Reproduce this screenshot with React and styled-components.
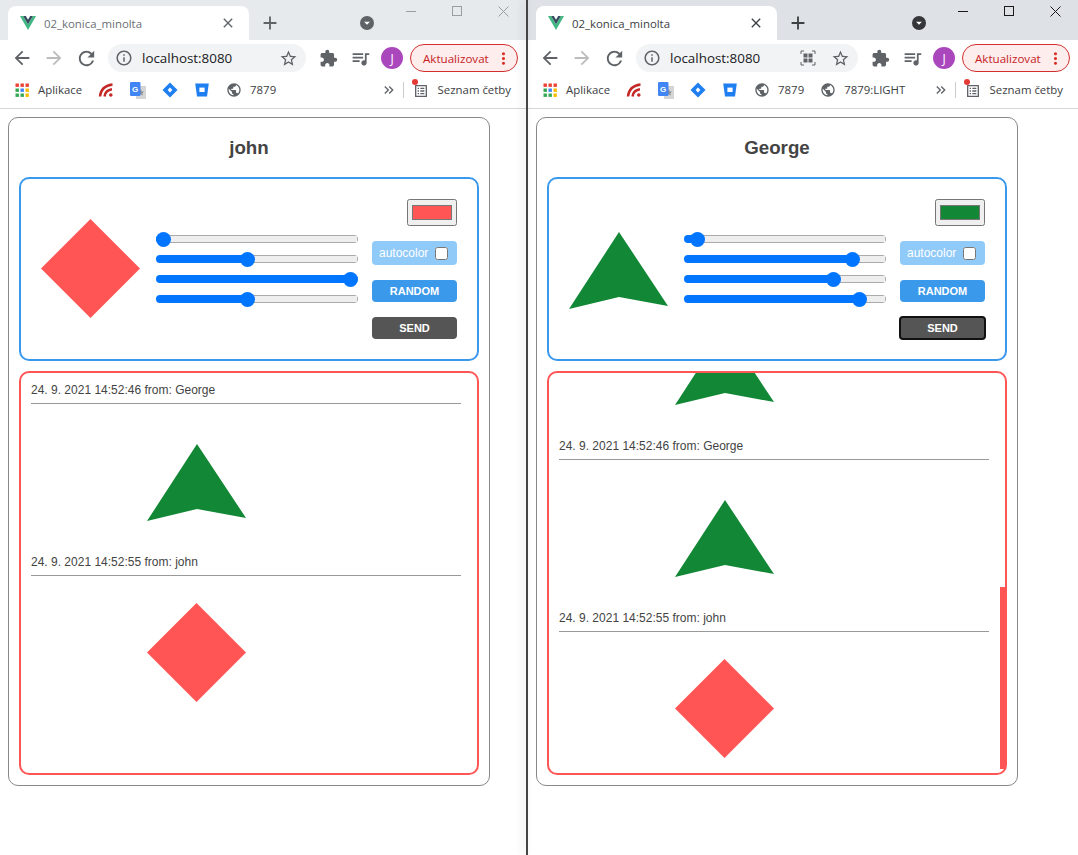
import React, { useLayoutEffect, useRef, useState } from "react";
import styled, { createGlobalStyle } from "styled-components";
import {
	MdArrowBack,
	MdArrowForward,
	MdRefresh,
	MdInfoOutline,
	MdStarBorder,
	MdClose,
	MdAdd,
	MdExtension,
	MdOutlineQueueMusic,
	MdMoreVert,
	MdPublic,
	MdKeyboardDoubleArrowRight,
	MdArrowDropDown,
	MdOutlineListAlt,
} from "react-icons/md";

const RED = "#ff5555";
const GREEN = "#128736";
const BLUE = "#3b99ec";
const UI_FONT = `"Open Sans", "Noto Sans", sans-serif`;

const GlobalStyle = createGlobalStyle`
	html, body {
		margin: 0;
		padding: 0;
		background: #fff;
	}
	* {
		box-sizing: border-box;
	}
`;

const Desktop = styled.div`
	display: flex;
	width: 1078px;
	height: 855px;
	overflow: hidden;
`;

const BrowserWindow = styled.div`
	flex: none;
	width: ${(p) => p.$width}px;
	height: 100%;
	font-family: ${UI_FONT};
	background: #fff;
`;

const Divider = styled.div`
	flex: none;
	width: 2px;
	background: #454545;
	box-shadow: -3px 0 8px rgba(0, 0, 0, 0.16);
	z-index: 1;
`;

/* browser chrome */
const TabStrip = styled.div`
	display: flex;
	height: 40px;
	padding-left: 8px;
	background: ${(p) => (p.$active ? "#dee1e6" : "#e7eaed")};
`;

const Tab = styled.div`
	display: flex;
	align-items: center;
	width: 241px;
	height: 34px;
	margin-top: 6px;
	padding: 0 8px 0 12px;
	background: #fff;
	border-radius: 8px 8px 0 0;
	font-size: 11.4px;
	color: ${(p) => (p.$active ? "#3c4043" : "#6b6f74")};
`;

const TabTitle = styled.span`
	flex: 1;
	margin-left: 8px;
	white-space: nowrap;
`;

const TabClose = styled.span`
	display: flex;
	margin-right: 5px;
	font-size: 16px;
	color: ${(p) => (p.$active ? "#3c4043" : "#5f6368")};
`;

const NewTab = styled.span`
	display: flex;
	align-items: center;
	justify-content: center;
	width: 28px;
	height: 28px;
	margin: 9px 0 0 7px;
	font-size: 22px;
	color: ${(p) => (p.$active ? "#3c4043" : "#5f6368")};
`;

const TabSearch = styled.span`
	display: flex;
	align-items: center;
	justify-content: center;
	align-self: flex-start;
	width: 14px;
	height: 14px;
	margin: 16px 14px 0 auto;
	border-radius: 50%;
	font-size: 16px;
	color: #fff;
	background: ${(p) => (p.$active ? "#35363a" : "#5f6368")};
`;

const WindowControl = styled.span`
	display: flex;
	align-items: center;
	justify-content: center;
	width: 46px;
	height: 22px;
	color: ${(p) => (p.$active ? "#1a1a1a" : "#9a9ea3")};
`;

const Toolbar = styled.div`
	display: flex;
	align-items: center;
	gap: 4px;
	height: 36px;
	padding-left: 8px;
	background: #fff;
`;

const ToolButton = styled.span`
	display: flex;
	align-items: center;
	justify-content: center;
	flex: none;
	width: 28px;
	height: 28px;
	font-size: ${(p) => p.$size || 20}px;
	color: ${(p) => p.$color || "#5f6368"};
`;

const Omnibox = styled.div`
	display: flex;
	align-items: center;
	flex: none;
	width: ${(p) => p.$width}px;
	height: 28px;
	margin: 0 4px;
	padding: 0 4px 0 7px;
	border-radius: 14px;
	background: #f1f3f4;
	font-size: 13.4px;
	color: #202124;
`;

const OmniInfo = styled.span`
	display: flex;
	font-size: 18px;
	color: #5f6368;
`;

const OmniText = styled.span`
	flex: 1;
	margin-left: 9px;
`;

const QrSlot = styled(ToolButton)`
	margin-right: 4px;
`;

const Avatar = styled.span`
	display: flex;
	align-items: center;
	justify-content: center;
	flex: none;
	width: 22px;
	height: 22px;
	margin: 0 3px;
	border-radius: 50%;
	background: #ab47bc;
	color: #fff;
	font-size: 12px;
`;

const UpdatePill = styled.div`
	display: flex;
	align-items: center;
	justify-content: space-between;
	flex: none;
	width: 108px;
	height: 28px;
	padding: 0 4px 0 12px;
	border: 1px solid #d32f2f;
	border-radius: 14px;
	background: #fdeded;
	color: #c5221f;
	font-size: 11.6px;
`;

const PillDots = styled.span`
	display: flex;
	font-size: 19px;
	color: #d93025;
`;

const Bookmarks = styled.div`
	display: flex;
	align-items: center;
	height: 33px;
	padding: 0 15px 5px 14px;
	border-bottom: 1px solid #d4d6d9;
	font-size: 11.4px;
	color: #3c4043;
	white-space: nowrap;
`;

const BookmarkGroup = styled.div`
	display: flex;
	align-items: center;
	gap: 16px;
	margin-left: 16px;
`;

const Bookmark = styled.span`
	display: flex;
	align-items: center;
	gap: 8px;
`;

const BookmarkIcon = styled.span`
	display: flex;
	flex: none;
	width: 16px;
	height: 16px;
	font-size: 16px;
	color: #5f6368;
`;

const BookmarkTail = styled.div`
	display: flex;
	align-items: center;
	margin-left: auto;
`;

const Chevrons = styled.span`
	display: flex;
	font-size: 16px;
	color: #5f6368;
`;

const BookmarkSeparator = styled.span`
	width: 1px;
	height: 16px;
	margin: 0 9px 0 6px;
	background: #c9cbce;
`;

const ReadingIcon = styled(BookmarkIcon)`
	position: relative;
	margin-right: 9px;
	font-size: 18px;
`;

const RedDot = styled.span`
	position: absolute;
	top: -3px;
	left: -1px;
	width: 6px;
	height: 6px;
	border-radius: 50%;
	background: #e53935;
`;

/* page content */
const Page = styled.div`
	padding: 8px;
	font-family: "Liberation Sans", Arial, sans-serif;
	color: #444;
`;

const Card = styled.div`
	width: 482px;
	height: 669px;
	padding: 0 10px 10px;
	border: 1px solid #888;
	border-radius: 10px;
`;

const Name = styled.h1`
	margin: 18px 0 18px;
	font-size: 18.72px;
	line-height: 23px;
	font-weight: 700;
	text-align: center;
	color: #444;
`;

const Editor = styled.div`
	display: flex;
	align-items: center;
	height: 184px;
	padding: 0 20px;
	border: 2px solid ${BLUE};
	border-radius: 10px;
`;

const SHAPES = {
	diamond: { points: "49.5,0 99,49.5 49.5,99 0,49.5", color: RED },
	arrow: { points: "50,13 99,87 50,78 0,90", color: GREEN },
};

const Shape = ({ kind, className }) => (
	<svg className={className} viewBox="0 0 100 100">
		<polygon points={SHAPES[kind].points} fill={SHAPES[kind].color} />
	</svg>
);

const EditorShape = styled(Shape)`
	display: block;
	flex: none;
	width: 100px;
	height: 100px;
`;

const MessageShape = styled(EditorShape)`
	margin: 27px 0 0 116px;
`;

const Sliders = styled.div`
	display: flex;
	flex-direction: column;
	margin: 0 14px 0 15px;
`;

const Slider = styled.input`
	-webkit-appearance: none;
	appearance: none;
	display: block;
	width: 202px;
	height: 8px;
	margin: 6px 0;
	border-radius: 4px;
	background:
		linear-gradient(to right, #0075ff var(--fill), transparent var(--fill)),
		linear-gradient(#eeeeee, #eeeeee) center / calc(100% - 2px) calc(100% - 2px) no-repeat,
		#aaaaaa;
	outline: none;
	&::-webkit-slider-thumb {
		-webkit-appearance: none;
		appearance: none;
		width: 15px;
		height: 15px;
		border-radius: 50%;
		background: #0075ff;
	}
`;

const Controls = styled.div`
	display: flex;
	flex-direction: column;
	align-items: flex-end;
	gap: 15px;
	width: 85px;
`;

const ColorInput = styled.input`
	display: block;
	width: 50px;
	height: 27px;
	margin: 0;
`;

const AutoColor = styled.label`
	display: flex;
	align-items: center;
	justify-content: space-between;
	width: 85px;
	height: 24px;
	padding: 0 9px 0 7px;
	border-radius: 4px;
	background: #90caf9;
	color: #fff;
	font-size: 12px;
	input {
		width: 13px;
		height: 13px;
		margin: 0;
	}
`;

const ActionButton = styled.button`
	width: ${(p) => (p.$focused ? 87 : 85)}px;
	height: ${(p) => (p.$focused ? 24 : 22)}px;
	margin: ${(p) => (p.$focused ? "-1px" : 0)};
	padding: 0;
	border: ${(p) => (p.$focused ? "2px solid #111" : "none")};
	border-radius: 4px;
	background: ${(p) => p.$bg};
	color: #fff;
	font-family: inherit;
	font-size: 11px;
	font-weight: 700;
`;

const MessageFrame = styled.div`
	position: relative;
	margin-top: 10px;
`;

const MessageList = styled.div`
	height: 404px;
	padding: 10px 16px 0 10px;
	border: 2px solid ${RED};
	border-radius: 10px;
	overflow-y: scroll;
	scrollbar-width: none;
`;

const ScrollThumb = styled.div`
	position: absolute;
	right: 2px;
	width: 5px;
	background: ${RED};
`;

const Message = styled.div`
	margin-bottom: 24px;
	&:last-child {
		margin-bottom: 14px;
	}
`;

const MessageHead = styled.div`
	height: 21px;
	padding-bottom: 7px;
	border-bottom: 1px solid #999;
	font-size: 12px;
	line-height: 14px;
`;

const Logo = () => (
	<svg width="16" height="14" viewBox="0 0 16 14">
		<polygon points="0,0 3.2,0 8,8.2 12.8,0 16,0 8,14" fill="#41b883" />
		<polygon points="3.2,0 5.8,0 8,3.8 10.2,0 12.8,0 8,8.2" fill="#35495e" />
	</svg>
);

const AppsIcon = () => {
	const colors = ["#ea4335", "#ea4335", "#ea4335", "#34a853", "#4285f4", "#fbbc04", "#34a853", "#34a853", "#fbbc04"];
	return (
		<svg width="16" height="16" viewBox="0 0 16 16">
			{colors.map((c, i) => (
				<rect key={i} x={1.5 + (i % 3) * 5} y={1.5 + Math.floor(i / 3) * 5} width="3.4" height="3.4" fill={c} />
			))}
		</svg>
	);
};

const FeedIcon = () => (
	<svg width="16" height="16" viewBox="0 0 16 16" fill="none" stroke="#c62828" strokeWidth="2.4">
		<path d="M2 14.5 C2.5 8 7 3.5 14.5 2.5" />
		<path d="M6.5 14.5 C7 10.5 9.5 7.8 14 7.2" />
		<circle cx="12.8" cy="13" r="1.8" fill="#c62828" stroke="none" />
	</svg>
);

const TranslateIcon = () => (
	<svg width="16" height="18" viewBox="0 0 16 18">
		<rect x="6" y="4" width="10" height="13" fill="#d5d5d5" />
		<path d="M10.8 7 l1 2.4 2.4 .2 -1.9 1.5 .7 2.4 -2.2 -1.3 -2.1 1.3 .6 -2.4 -1.9 -1.5 2.4 -.2z" fill="#8a8f94" />
		<rect x="0" y="0" width="10.5" height="14" rx="1" fill="#4285f4" />
		<text x="5.2" y="9.6" fontSize="8" fontWeight="700" fontFamily="Liberation Sans" fill="#fff" textAnchor="middle">
			G
		</text>
	</svg>
);

const JiraIcon = () => (
	<svg width="16" height="16" viewBox="0 0 16 16">
		<polygon points="8,0.5 15.5,8 8,15.5 0.5,8" fill="#1f7ff0" />
		<polygon points="8,5.6 10.4,8 8,10.4 5.6,8" fill="#fff" />
	</svg>
);

const BitbucketIcon = () => (
	<svg width="16" height="16" viewBox="0 0 16 16">
		<path d="M1.2 1.5 H14.8 L13 14.5 H3z" fill="#1f7ff0" />
		<rect x="5.4" y="5.6" width="5.2" height="4.4" fill="#fff" />
	</svg>
);

const QrIcon = () => (
	<svg width="16" height="16" viewBox="0 0 16 16" fill="none" stroke="#5f6368">
		<path d="M1 4 V1 H4 M12 1 H15 V4 M15 12 V15 H12 M4 15 H1 V12" />
		<g fill="#5f6368" stroke="none">
			<rect x="3.5" y="3.5" width="4" height="4" />
			<rect x="8.5" y="3.5" width="4" height="4" />
			<rect x="3.5" y="8.5" width="4" height="4" />
			<rect x="8.5" y="8.5" width="4" height="4" />
		</g>
	</svg>
);

const MinimizeGlyph = () => (
	<svg width="10" height="10" viewBox="0 0 10 10">
		<path d="M0 5.5 H10" stroke="currentColor" />
	</svg>
);

const MaximizeGlyph = () => (
	<svg width="10" height="10" viewBox="0 0 10 10">
		<rect x="0.5" y="0.5" width="9" height="9" fill="none" stroke="currentColor" />
	</svg>
);

const CloseGlyph = () => (
	<svg width="11" height="11" viewBox="0 0 11 11">
		<path d="M0.5 0.5 L10.5 10.5 M10.5 0.5 L0.5 10.5" stroke="currentColor" />
	</svg>
);

const BrowserChrome = ({ active, omniboxWidth, extraBookmark }) => (
	<>
		<TabStrip $active={active}>
			<Tab $active={active}>
				<Logo />
				<TabTitle>02_konica_minolta</TabTitle>
				<TabClose $active={active}>
					<MdClose />
				</TabClose>
			</Tab>
			<NewTab $active={active}>
				<MdAdd />
			</NewTab>
			<TabSearch $active={active}>
				<MdArrowDropDown />
			</TabSearch>
			<WindowControl $active={active}>
				<MinimizeGlyph />
			</WindowControl>
			<WindowControl $active={active}>
				<MaximizeGlyph />
			</WindowControl>
			<WindowControl $active={active}>
				<CloseGlyph />
			</WindowControl>
		</TabStrip>
		<Toolbar>
			<ToolButton $size={22}>
				<MdArrowBack />
			</ToolButton>
			<ToolButton $size={22} $color="#babcbe">
				<MdArrowForward />
			</ToolButton>
			<ToolButton $size={23}>
				<MdRefresh />
			</ToolButton>
			<Omnibox $width={omniboxWidth}>
				<OmniInfo>
					<MdInfoOutline />
				</OmniInfo>
				<OmniText>localhost:8080</OmniText>
				{active && (
					<QrSlot>
						<QrIcon />
					</QrSlot>
				)}
				<ToolButton $size={19}>
					<MdStarBorder />
				</ToolButton>
			</Omnibox>
			<ToolButton $size={19}>
				<MdExtension />
			</ToolButton>
			<ToolButton $size={21}>
				<MdOutlineQueueMusic />
			</ToolButton>
			<Avatar>J</Avatar>
			<UpdatePill>
				Aktualizovat
				<PillDots>
					<MdMoreVert />
				</PillDots>
			</UpdatePill>
		</Toolbar>
		<Bookmarks>
			<Bookmark>
				<BookmarkIcon>
					<AppsIcon />
				</BookmarkIcon>
				Aplikace
			</Bookmark>
			<BookmarkGroup>
				<BookmarkIcon>
					<FeedIcon />
				</BookmarkIcon>
				<BookmarkIcon>
					<TranslateIcon />
				</BookmarkIcon>
				<BookmarkIcon>
					<JiraIcon />
				</BookmarkIcon>
				<BookmarkIcon>
					<BitbucketIcon />
				</BookmarkIcon>
				<Bookmark>
					<BookmarkIcon>
						<MdPublic />
					</BookmarkIcon>
					7879
				</Bookmark>
				{extraBookmark && (
					<Bookmark>
						<BookmarkIcon>
							<MdPublic />
						</BookmarkIcon>
						{extraBookmark}
					</Bookmark>
				)}
			</BookmarkGroup>
			<BookmarkTail>
				<Chevrons>
					<MdKeyboardDoubleArrowRight />
				</Chevrons>
				<BookmarkSeparator />
				<ReadingIcon>
					<MdOutlineListAlt />
					<RedDot />
				</ReadingIcon>
				Seznam četby
			</BookmarkTail>
		</Bookmarks>
	</>
);

const Messages = ({ items }) => {
	const listRef = useRef(null);
	const [thumb, setThumb] = useState(null);

	// the list stays scrolled to the newest message
	useLayoutEffect(() => {
		const el = listRef.current;
		el.scrollTop = el.scrollHeight;
		if (el.scrollHeight > el.clientHeight) {
			const track = el.clientHeight - 8;
			const height = (track * el.clientHeight) / el.scrollHeight;
			const ratio = el.scrollTop / (el.scrollHeight - el.clientHeight);
			setThumb({ height, top: 6 + (track - height) * ratio });
		}
	}, []);

	return (
		<MessageFrame>
			<MessageList ref={listRef}>
				{items.map((m) => (
					<Message key={m.time}>
						<MessageHead>
							24. 9. 2021 {m.time} from: {m.from}
						</MessageHead>
						<MessageShape kind={m.shape} />
					</Message>
				))}
			</MessageList>
			{thumb && <ScrollThumb style={thumb} />}
		</MessageFrame>
	);
};

const Client = ({ user }) => (
	<Page>
		<Card>
			<Name>{user.name}</Name>
			<Editor>
				<EditorShape kind={user.shape} />
				<Sliders>
					{user.sliders.map((v, i) => (
						<Slider
							key={i}
							type="range"
							min="0"
							max="100"
							defaultValue={v}
							style={{ "--fill": `calc(7.5px + (100% - 15px) * ${v / 100})` }}
						/>
					))}
				</Sliders>
				<Controls>
					<ColorInput type="color" defaultValue={SHAPES[user.shape].color} />
					<AutoColor>
						autocolor
						<input type="checkbox" />
					</AutoColor>
					<ActionButton $bg={BLUE}>RANDOM</ActionButton>
					<ActionButton $bg="#555" $focused={user.sendFocused}>
						SEND
					</ActionButton>
				</Controls>
			</Editor>
			<Messages items={user.messages} />
		</Card>
	</Page>
);

const john = {
	name: "john",
	shape: "diamond",
	sliders: [0, 45, 100, 45],
	messages: [
		{ time: "14:52:46", from: "George", shape: "arrow" },
		{ time: "14:52:55", from: "john", shape: "diamond" },
	],
};

const george = {
	name: "George",
	shape: "arrow",
	sliders: [3, 86, 76, 90],
	sendFocused: true,
	messages: [
		{ time: "14:52:21", from: "George", shape: "arrow" },
		{ time: "14:52:29", from: "George", shape: "arrow" },
		{ time: "14:52:38", from: "George", shape: "arrow" },
		{ time: "14:52:46", from: "George", shape: "arrow" },
		{ time: "14:52:55", from: "john", shape: "diamond" },
	],
};

export default function App() {
	return (
		<>
			<GlobalStyle />
			<Desktop>
				<BrowserWindow $width={526}>
					<BrowserChrome omniboxWidth={198} />
					<Client user={john} />
				</BrowserWindow>
				<Divider />
				<BrowserWindow $width={550}>
					<BrowserChrome active omniboxWidth={222} extraBookmark="7879:LIGHT" />
					<Client user={george} />
				</BrowserWindow>
			</Desktop>
		</>
	);
}
